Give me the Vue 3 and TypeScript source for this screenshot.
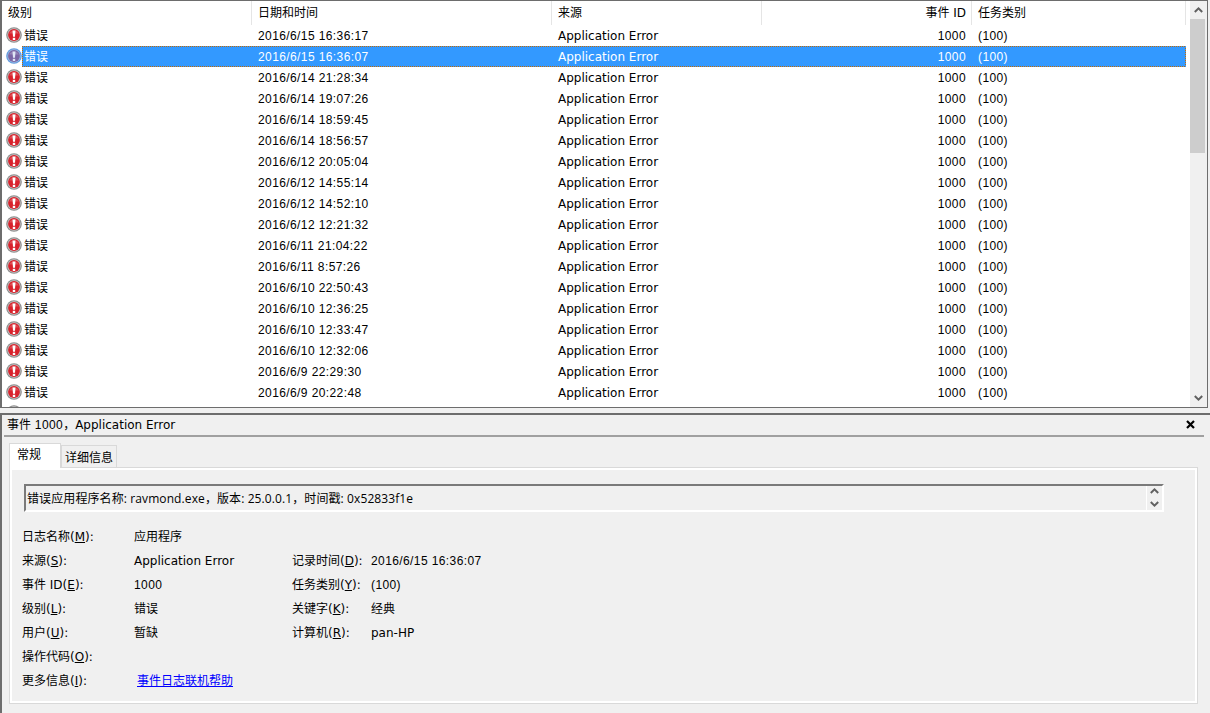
<script setup lang="ts">
const times: string[] = [
  '2016/6/15 16:36:17','2016/6/15 16:36:07','2016/6/14 21:28:34','2016/6/14 19:07:26','2016/6/14 18:59:45','2016/6/14 18:56:57',
  '2016/6/12 20:05:04','2016/6/12 14:55:14','2016/6/12 14:52:10','2016/6/12 12:21:32','2016/6/11 21:04:22','2016/6/11 8:57:26',
  '2016/6/10 22:50:43','2016/6/10 12:36:25','2016/6/10 12:33:47','2016/6/10 12:32:06','2016/6/9 22:29:30','2016/6/9 20:22:48',''
]
</script>

<template>
  <div class="win">
    <section class="list">
      <div class="table">
        <div class="head">
          <div class="hc c1">级别</div>
          <div class="hc c2">日期和时间</div>
          <div class="hc c3">来源</div>
          <div class="hc c4">事件 ID</div>
          <div class="hc c5">任务类别</div>
        </div>
        <div class="rows">
          <div v-for="(t, i) in times" :key="i" class="row" :class="{ sel: i === 1 }">
            <svg class="ico" viewBox="0 0 16 16" width="16" height="16">
              <circle cx="8" cy="8" r="7.8" :fill="i === 1 ? '#5f9ae0' : '#8c8c8c'" />
              <circle cx="8" cy="8" r="6.7" :fill="i === 1 ? '#9fb8dc' : '#c4c4c4'" />
              <circle cx="8" cy="8" r="5.9" :fill="i === 1 ? '#7a66a6' : '#d8222c'" />
              <path d="M3.2 6.6A5.2 5.2 0 0 1 12.8 6.6Z" fill="#fff" opacity=".2" />
              <path d="M6.5 3.4H9.5L9 9.7H7Z" :fill="i === 1 ? '#dfe6f5' : '#fff'" />
              <rect x="6.8" y="10.8" width="2.4" height="2.2" :fill="i === 1 ? '#dfe6f5' : '#fff'" />
            </svg>
            <div v-if="t" class="cells">
              <span class="c1b">错误</span>
              <span class="c2b num">{{ t }}</span>
              <span class="c3b">Application Error</span>
              <span class="c4b num">1000</span>
              <span class="c5b num">(100)</span>
            </div>
          </div>
        </div>
      </div>
      <div class="sb">
        <svg class="arrow" viewBox="0 0 9 6" width="9" height="6"><path d="M.8 5 4.5 1.4 8.2 5" fill="none" stroke="#606060" stroke-width="2" /></svg>
        <div class="track"><div class="thumb"></div></div>
        <svg class="arrow" viewBox="0 0 9 6" width="9" height="6"><path d="M.8 1 4.5 4.6 8.2 1" fill="none" stroke="#606060" stroke-width="2" /></svg>
      </div>
    </section>

    <section class="panel">
      <div class="title">
        <span>事件 <span class="num">1000</span>，<span>Application Error</span></span>
        <svg viewBox="0 0 9 9" width="9" height="9" class="close"><path d="M1 1 8 8M8 1 1 8" stroke="#000" stroke-width="2.2" /></svg>
      </div>
      <div class="tabs">
        <div class="tab on">常规</div>
        <div class="tab">详细信息</div>
      </div>
      <div class="body">
        <div class="msg">
          <span class="msg-text">错误应用程序名称: ravmond.exe，版本: 25.0.0.1，时间戳: 0x52833f1e</span>
          <div class="msb">
            <svg viewBox="0 0 9 6" width="9" height="6"><path d="M.8 5 4.5 1.4 8.2 5" fill="none" stroke="#606060" stroke-width="2" /></svg>
            <svg viewBox="0 0 9 6" width="9" height="6"><path d="M.8 1 4.5 4.6 8.2 1" fill="none" stroke="#606060" stroke-width="2" /></svg>
          </div>
        </div>
        <div class="grid">
          <span>日志名称(<u>M</u>):</span><span>应用程序</span><span></span><span></span>
          <span>来源(<u>S</u>):</span><span>Application Error</span><span>记录时间(<u>D</u>):</span><span class="num">2016/6/15 16:36:07</span>
          <span>事件 ID(<u>E</u>):</span><span class="num">1000</span><span>任务类别(<u>Y</u>):</span><span class="num">(100)</span>
          <span>级别(<u>L</u>):</span><span>错误</span><span>关键字(<u>K</u>):</span><span>经典</span>
          <span>用户(<u>U</u>):</span><span>暂缺</span><span>计算机(<u>R</u>):</span><span>pan-HP</span>
          <span>操作代码(<u>O</u>):</span><span></span><span></span><span></span>
          <span>更多信息(<u>I</u>):</span><a class="link">事件日志联机帮助</a><span></span><span></span>
        </div>
      </div>
    </section>
  </div>
</template>

<style scoped>
.win {
  width: 1210px;
  height: 713px;
  background: #f0f0f0;
  display: flex;
  flex-direction: column;
  overflow: hidden;
  color: #000;
  font: 12px/16px "DejaVu Sans", "Noto Sans CJK SC", sans-serif;
}
.num { font-family: "Liberation Sans", "Noto Sans CJK SC", sans-serif; letter-spacing: .4px; }
.list {
  height: 408px;
  flex: none;
  margin-right: 2px;
  border: 1px solid #6d6d6d;
  border-left-width: 2px;
  box-sizing: border-box;
  background: #fff;
  display: flex;
  overflow: hidden;
}
.table { width: 1184px; flex: none; }
.head { display: flex; height: 24px; }
.hc {
  box-sizing: border-box;
  padding: 1px 6px 0;
  line-height: 23px;
  border-right: 1px solid #e5e5e5;
  height: 24px;
  flex: none;
}
.c1 { width: 250px; }
.c2 { width: 300px; }
.c3 { width: 210px; }
.c4 { width: 210px; text-align: right; padding-right: 5px; }
.c5 { width: 214px; }
.row { display: flex; height: 21px; align-items: flex-start; }
.ico { margin: 2px 0 0 4px; flex: none; }
.cells {
  flex: 1;
  display: flex;
  height: 21px;
  box-sizing: border-box;
  line-height: 21px;
  border: 1px solid transparent;
}
.sel .cells {
  color: #fff;
  border-color: transparent;
  background:
    repeating-linear-gradient(90deg, #c66a00 0 1px, #3399ff 1px 2px) top left / 100% 1px no-repeat border-box,
    repeating-linear-gradient(90deg, #c66a00 0 1px, #3399ff 1px 2px) bottom left / 100% 1px no-repeat border-box,
    repeating-linear-gradient(0deg, #c66a00 0 1px, #3399ff 1px 2px) top left / 1px 100% no-repeat border-box,
    repeating-linear-gradient(0deg, #c66a00 0 1px, #3399ff 1px 2px) top right / 1px 100% no-repeat border-box,
    #3399ff;
}
.c1b { width: 234px; padding-left: 1px; flex: none; }
.c2b { width: 300px; flex: none; }
.c3b { width: 305px; flex: none; }
.c4b { width: 103px; flex: none; text-align: right; }
.c5b { margin-left: 12px; }
.sb {
  width: 17px;
  margin-left: 4px;
  background: #f0f0f0;
  display: flex;
  flex-direction: column;
  align-items: center;
  flex: none;
}
.arrow { flex: none; margin: 6px 0; }
.track { flex: 1; width: 100%; }
.thumb { height: 134px; width: 15px; background: #cdcdcd; }
.panel {
  flex: 1;
  margin-top: 5px;
  border-top: 2px solid #6d6d6d;
  border-left: 2px solid #6d6d6d;
  display: flex;
  flex-direction: column;
  padding: 0 6px 9px 2px;
}
.title {
  height: 19px;
  padding: 0 9px 1px 3px;
  display: flex;
  align-items: center;
  justify-content: space-between;
  border-bottom: 2px solid #a0a0a0;
}
.close { margin-bottom: 1px; }
.tabs { display: flex; align-items: flex-end; height: 30px; padding-left: 5px; position: relative; z-index: 1; }
.tab {
  box-sizing: border-box;
  width: 56px;
  height: 22px;
  line-height: 24px;
  text-align: center;
  border: 1px solid #d9d9d9;
  border-bottom: 0;
  background: #f0f0f0;
}
.tab.on {
  width: 52px;
  height: 25px;
  line-height: 22px;
  text-align: left;
  padding-left: 7px;
  background: #fff;
  margin-bottom: -1px;
}
.body {
  flex: 1;
  margin-left: 5px;
  margin-right: 6px;
  border: 1px solid #d9d9d9;
  box-shadow: inset 0 0 0 2px #fff;
  padding: 16px 10px 0 14px;
}
.msg {
  width: 1140px;
  height: 28px;
  box-sizing: border-box;
  border: 2px solid #7a7a7a;
  border-right-color: #fff;
  border-bottom-color: #fff;
  display: flex;
  align-items: center;
  justify-content: space-between;
}
.msg-text { padding: 2px 0 0 1px; font-family: "Open Sans", "Noto Sans CJK SC", sans-serif; letter-spacing: .1px; }
.msb {
  width: 16px;
  height: 100%;
  box-sizing: border-box;
  border-left: 1px solid #fff;
  display: flex;
  flex-direction: column;
  align-items: center;
  gap: 7px;
  padding-top: 2px;
}
.msb svg { display: block; flex: none; }
.grid {
  display: grid;
  grid-template-columns: 112px 158px 79px 1fr;
  grid-auto-rows: 24px;
  margin-top: 13px;
  margin-left: -2px;
  align-items: center;
}
.link { color: #0000ff; text-decoration: underline; margin-left: 3px; }
</style>
